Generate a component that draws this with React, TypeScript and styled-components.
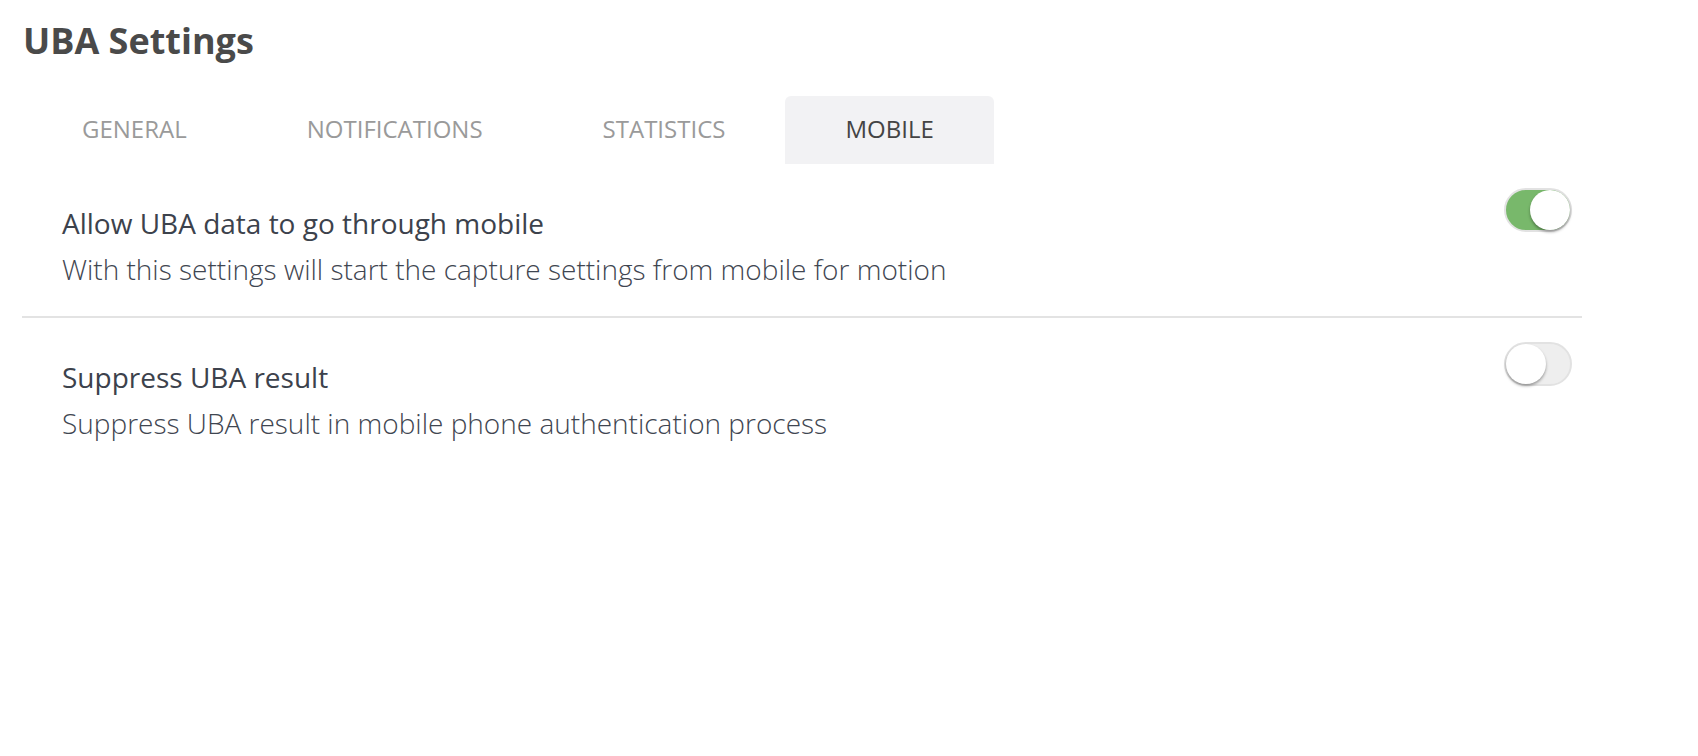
import React, { useState } from "react";
import styled, { createGlobalStyle } from "styled-components";

const GlobalStyle = createGlobalStyle`
  html, body { margin: 0; padding: 0; background: #ffffff; }
  body { font-family: "Open Sans", "Liberation Sans", sans-serif; }
  * { box-sizing: border-box; }
`;

const Page = styled.div`
  padding: 14px 0 0 22px;
  width: 1582px;
`;

const Title = styled.h1`
  margin: 0 0 0 1px;
  font-size: 36px;
  line-height: 54px;
  font-weight: 700;
  color: #4a4a4a;
`;

const TabBar = styled.div`
  display: flex;
  margin-top: 28px;
`;

const Tab = styled.button<{ $active?: boolean }>`
  height: 68px;
  padding: 0 60px 3px;
  border: none;
  border-radius: 6px 6px 0 0;
  background: ${(p) => (p.$active ? "#f2f2f4" : "transparent")};
  color: ${(p) => (p.$active ? "#444444" : "#9a9a9a")};
  font-family: "Open Sans", "Liberation Sans", sans-serif;
  font-size: 24px;
  font-weight: 400;
  text-transform: uppercase;
  cursor: pointer;
`;

const Row = styled.div<{ $divider?: boolean }>`
  display: flex;
  justify-content: space-between;
  align-items: flex-start;
  padding: 24px 10px 21px 40px;
  border-bottom: ${(p) => (p.$divider ? "2px solid #e3e3e3" : "none")};
`;

const RowText = styled.div`
  display: flex;
  flex-direction: column;
  padding-top: 15px;
`;

const RowTitle = styled.div`
  font-size: 28px;
  line-height: 40px;
  font-weight: 400;
  color: #3c424c;
`;

const RowDesc = styled.div`
  font-size: 28px;
  line-height: 52px;
  font-weight: 300;
  color: #3f4651;
`;

const Track = styled.button<{ $on: boolean }>`
  position: relative;
  width: 68px;
  height: 44px;
  padding: 0;
  border-radius: 22px;
  border: 2px solid #e2e2e2;
  background: ${(p) => (p.$on ? "#78b86b" : "#eeeeee")};
  cursor: pointer;
  flex-shrink: 0;
`;

const Knob = styled.span<{ $on: boolean }>`
  position: absolute;
  top: 0;
  left: ${(p) => (p.$on ? "24px" : "0")};
  width: 40px;
  height: 40px;
  border-radius: 50%;
  background: #ffffff;
  box-shadow: 0 2px 3px rgba(0, 0, 0, 0.35);
`;

function Toggle({ on, onClick }: { on: boolean; onClick: () => void }) {
  return (
    <Track $on={on} onClick={onClick} aria-pressed={on}>
      <Knob $on={on} />
    </Track>
  );
}

const tabs = ["General", "Notifications", "Statistics", "Mobile"];

export default function App() {
  const [active, setActive] = useState(3);
  const [allow, setAllow] = useState(true);
  const [suppress, setSuppress] = useState(false);

  return (
    <>
      <GlobalStyle />
      <Page>
        <Title>UBA Settings</Title>
        <TabBar>
          {tabs.map((t, i) => (
            <Tab key={t} $active={i === active} onClick={() => setActive(i)}>
              {t}
            </Tab>
          ))}
        </TabBar>
        <Row $divider>
          <RowText>
            <RowTitle>Allow UBA data to go through mobile</RowTitle>
            <RowDesc>With this settings will start the capture settings from mobile for motion</RowDesc>
          </RowText>
          <Toggle on={allow} onClick={() => setAllow(!allow)} />
        </Row>
        <Row>
          <RowText>
            <RowTitle>Suppress UBA result</RowTitle>
            <RowDesc>Suppress UBA result in mobile phone authentication process</RowDesc>
          </RowText>
          <Toggle on={suppress} onClick={() => setSuppress(!suppress)} />
        </Row>
      </Page>
    </>
  );
}
